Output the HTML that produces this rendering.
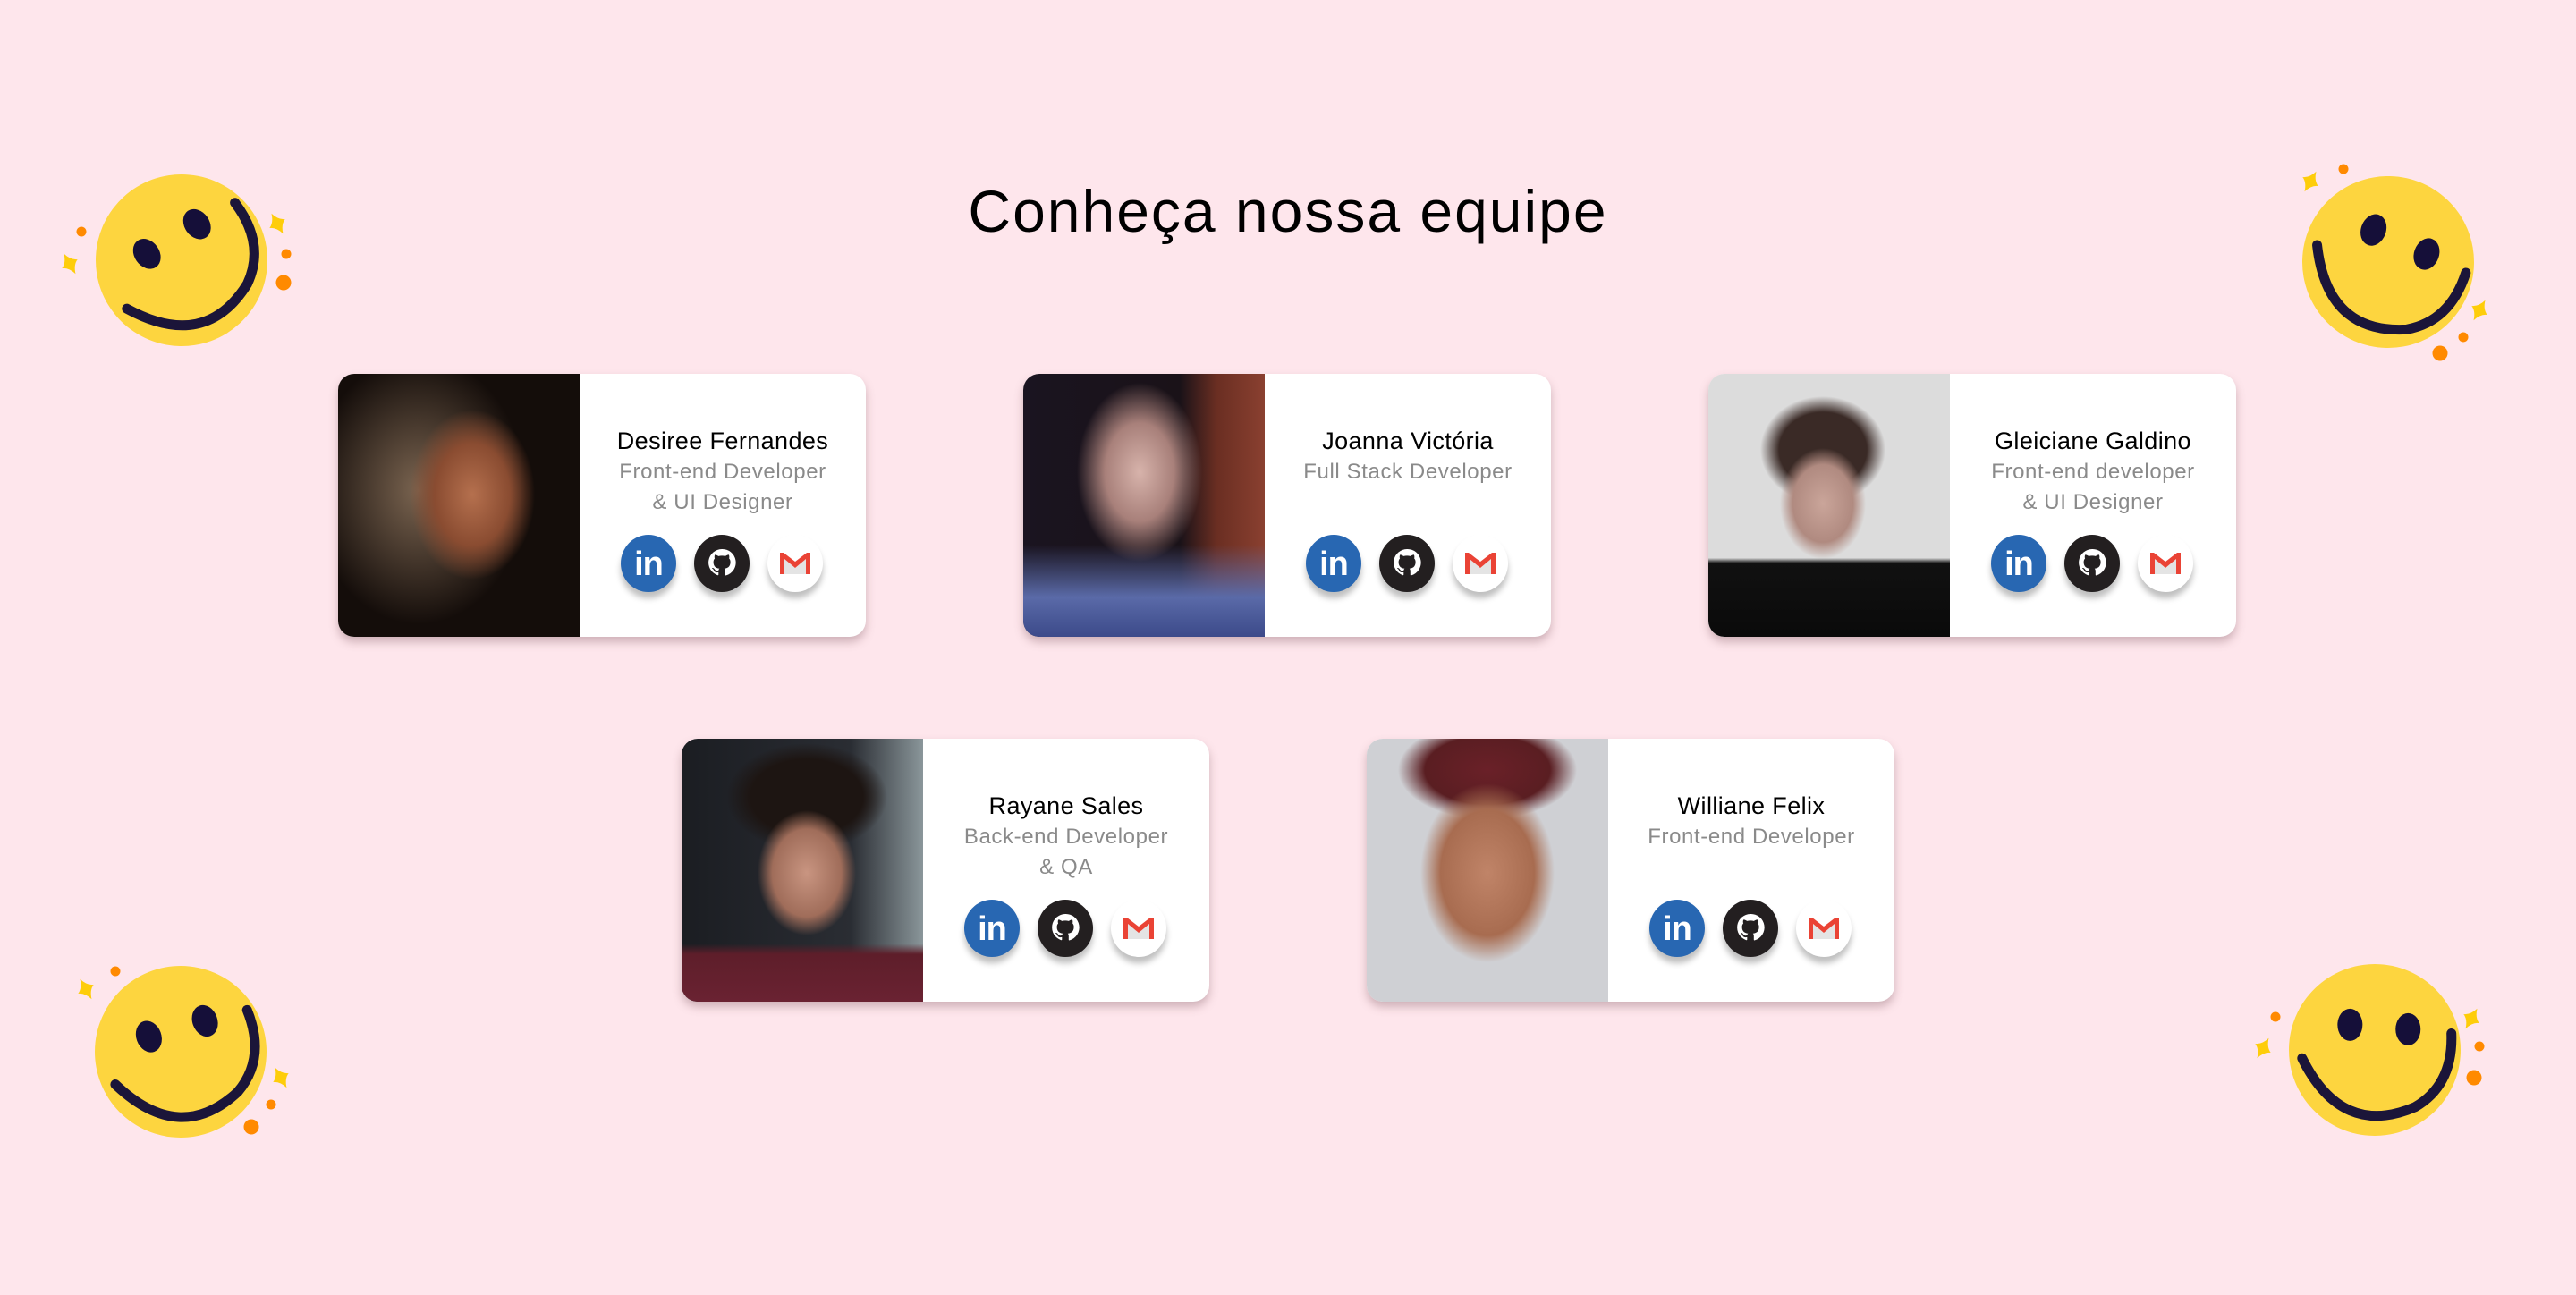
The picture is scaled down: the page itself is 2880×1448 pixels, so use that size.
<!DOCTYPE html>
<html><head><meta charset="utf-8"><style>
*{margin:0;padding:0;box-sizing:border-box}
body{width:2880px;height:1448px;background:#fee6ec;position:relative;overflow:hidden;font-family:"Liberation Sans",sans-serif}
h1{position:absolute;left:0;width:2880px;top:196px;text-align:center;font-weight:400;font-size:66px;letter-spacing:2px;color:#000;line-height:80px}
.card{position:absolute;width:590px;height:294px;background:#fff;border-radius:18px;box-shadow:0 6px 10px rgba(120,80,90,.35);overflow:hidden}
.ph{position:absolute;left:0;top:0;width:270px;height:294px}
.tx{position:absolute;left:270px;width:320px;text-align:center}
.nm{top:58px;font-size:27px;color:#000;letter-spacing:.4px;line-height:34px}
.rl{top:93px;font-size:24px;color:#8a8a8a;letter-spacing:.6px;line-height:34px}
.ic{position:absolute;top:180px;width:62px;height:64px;border-radius:50%;box-shadow:0 7px 7px rgba(0,0,0,.25)}
.li{left:316px;background:#2867b2;color:#fff;font-weight:700;font-size:38px;text-align:center;line-height:66px;letter-spacing:-1px}
.gh{left:398px;background:#231f20}
.gm{left:480px;background:#fff}
.ic svg{position:absolute;left:0;top:0}
svg.sm{position:absolute}
</style></head><body>
<h1>Conheça nossa equipe</h1>

<svg class="sm" style="left:0;top:0" width="2880" height="1448">
<defs>
<g id="face"><circle r="96" fill="#fdd53f"/><ellipse cx="-34" cy="-20" rx="14" ry="18" fill="#150f39" transform="rotate(-15 -34 -20)"/><ellipse cx="30" cy="-32" rx="14" ry="18" fill="#150f39" transform="rotate(-15 30 -32)"/><path d="M-76 30 Q-10 105 60 50 Q95 15 78 -40" fill="none" stroke="#1b1539" stroke-width="11" stroke-linecap="round"/></g>
<path id="sp" d="M0 -13 Q3 -3 10 0 Q3 3 0 13 Q-3 3 -10 0 Q-3 -3 0 -13Z" fill="#fecd0a"/>
</defs>
<use href="#face" transform="translate(203 291) rotate(-20)"/>
<use href="#sp" transform="translate(78 295) rotate(-30)"/><use href="#sp" transform="translate(310 250) rotate(-30)"/>
<circle cx="91" cy="259" r="5.5" fill="#ff8a00"/><circle cx="320" cy="284" r="5.5" fill="#ff8a00"/><circle cx="317" cy="316" r="8.5" fill="#ff8a00"/>

<use href="#face" transform="translate(2670 293) rotate(35)"/>
<use href="#sp" transform="translate(2583 203) rotate(30)"/><use href="#sp" transform="translate(2772 347) rotate(30)"/>
<circle cx="2620" cy="189" r="5.5" fill="#ff8a00"/><circle cx="2754" cy="377" r="5.5" fill="#ff8a00"/><circle cx="2728" cy="395" r="8.5" fill="#ff8a00"/>

<use href="#face" transform="translate(202 1176) rotate(-5)"/>
<use href="#sp" transform="translate(96 1106) rotate(-30)"/><use href="#sp" transform="translate(314 1205) rotate(-30)"/>
<circle cx="129" cy="1086" r="5.5" fill="#ff8a00"/><circle cx="303" cy="1235" r="5.5" fill="#ff8a00"/><circle cx="281" cy="1260" r="8.5" fill="#ff8a00"/>

<use href="#face" transform="translate(2655 1174) rotate(15)"/>
<use href="#sp" transform="translate(2530 1172) rotate(30)"/><use href="#sp" transform="translate(2763 1139) rotate(30)"/>
<circle cx="2544" cy="1137" r="5.5" fill="#ff8a00"/><circle cx="2772" cy="1170" r="5.5" fill="#ff8a00"/><circle cx="2766" cy="1205" r="8.5" fill="#ff8a00"/>
</svg>

<!-- card 1 -->
<div class="card" style="left:378px;top:418px">
<div class="ph" style="background:radial-gradient(ellipse 70px 95px at 150px 135px,#b5704e 0,#8a4c31 60%,rgba(60,30,20,0) 100%),radial-gradient(ellipse 120px 150px at 90px 130px,#7a6450 0,rgba(40,28,20,0) 100%),#140d0a"></div>
<div class="tx nm">Desiree Fernandes</div>
<div class="tx rl">Front-end Developer<br>&amp; UI Designer</div>
<div class="ic li">in</div><div class="ic gh">GH</div><div class="ic gm">M</div>
</div>
<!-- card 2 -->
<div class="card" style="left:1144px;top:418px">
<div class="ph" style="background:radial-gradient(ellipse 70px 100px at 130px 110px,#d7b3ab 0,#a8807a 55%,rgba(40,25,25,0) 100%),linear-gradient(180deg,rgba(0,0,0,0) 65%,#5a6aa8 85%,#3c4a8a 100%),linear-gradient(90deg,#1a1420 0,#1a1218 65%,#6a2e22 80%,#8a4030 100%)"></div>
<div class="tx nm">Joanna Victória</div>
<div class="tx rl">Full Stack Developer</div>
<div class="ic li">in</div><div class="ic gh">GH</div><div class="ic gm">M</div>
</div>
<!-- card 3 -->
<div class="card" style="left:1910px;top:418px">
<div class="ph" style="background:radial-gradient(ellipse 48px 62px at 128px 145px,#caa59a 0,#b08a80 70%,rgba(180,150,140,0) 100%),radial-gradient(ellipse 70px 60px at 128px 85px,#3a2a26 0,#3a2a26 70%,rgba(58,42,38,0) 100%),linear-gradient(180deg,rgba(0,0,0,0) 70%,#111 72%,#0a0a0a 100%),#dcdcdc"></div>
<div class="tx nm">Gleiciane Galdino</div>
<div class="tx rl">Front-end developer<br>&amp; UI Designer</div>
<div class="ic li">in</div><div class="ic gh">GH</div><div class="ic gm">M</div>
</div>
<!-- card 4 -->
<div class="card" style="left:762px;top:826px">
<div class="ph" style="background:radial-gradient(ellipse 55px 70px at 140px 150px,#c99581 0,#a06d5a 70%,rgba(60,30,30,0) 100%),radial-gradient(ellipse 90px 60px at 140px 65px,#1d1512 0,#1d1512 70%,rgba(0,0,0,0) 100%),linear-gradient(180deg,rgba(0,0,0,0) 78%,#5e1e2a 82%,#6a2232 100%),linear-gradient(90deg,#1b1d22,#2a2d33 70%,#8a969a 100%)"></div>
<div class="tx nm">Rayane Sales</div>
<div class="tx rl">Back-end Developer<br>&amp; QA</div>
<div class="ic li">in</div><div class="ic gh">GH</div><div class="ic gm">M</div>
</div>
<!-- card 5 -->
<div class="card" style="left:1528px;top:826px">
<div class="ph" style="background:radial-gradient(ellipse 75px 100px at 135px 150px,#c08468 0,#a86c50 70%,rgba(160,100,80,0) 100%),radial-gradient(ellipse 100px 55px at 135px 35px,#6a2028 0,#5a1e22 70%,rgba(0,0,0,0) 100%),#cfd0d4"></div>
<div class="tx nm">Williane Felix</div>
<div class="tx rl">Front-end Developer</div>
<div class="ic li">in</div><div class="ic gh">GH</div><div class="ic gm">M</div>
</div>

<script>
document.querySelectorAll('.gh').forEach(e=>{e.textContent='';e.innerHTML='<svg width="62" height="64" viewBox="0 0 62 64"><path fill="#fff" d="M31 16a15 15 0 0 0-4.7 29.2c.8.1 1-.3 1-.7v-2.6c-4.2.9-5-1.8-5-1.8-.7-1.7-1.7-2.2-1.7-2.2-1.4-.9.1-.9.1-.9 1.5.1 2.3 1.6 2.3 1.6 1.3 2.3 3.5 1.6 4.4 1.200.1-1 .5-1.6 1-2-3.3-.4-6.8-1.700-6.8-7.4 0-1.6.6-3 1.5-4-.2-.4-.7-1.9.1-4 0 0 1.3-.4 4.1 1.5a14 14 0 0 1 7.5 0c2.9-1.9 4.1-1.5 4.1-1.5.8 2.1.3 3.6.2 4 1 1 1.5 2.4 1.5 4 0 5.8-3.5 7-6.8 7.4.5.5 1 1.4 1 2.8v4.1c0 .4.3.9 1 .7A15 15 0 0 0 31 16z"/></svg>'});
document.querySelectorAll('.gm').forEach(e=>{e.textContent='';e.innerHTML='<svg width="62" height="64" viewBox="0 0 62 64"><path d="M19 27l12 10 12-10v17H19z" fill="#e4e4e4"/><path d="M14 20h4l13 10 13-10h4v24h-5V27L31 37 19 27v17h-5z" fill="#ea4335"/></svg>'});
</script>
</body></html>
